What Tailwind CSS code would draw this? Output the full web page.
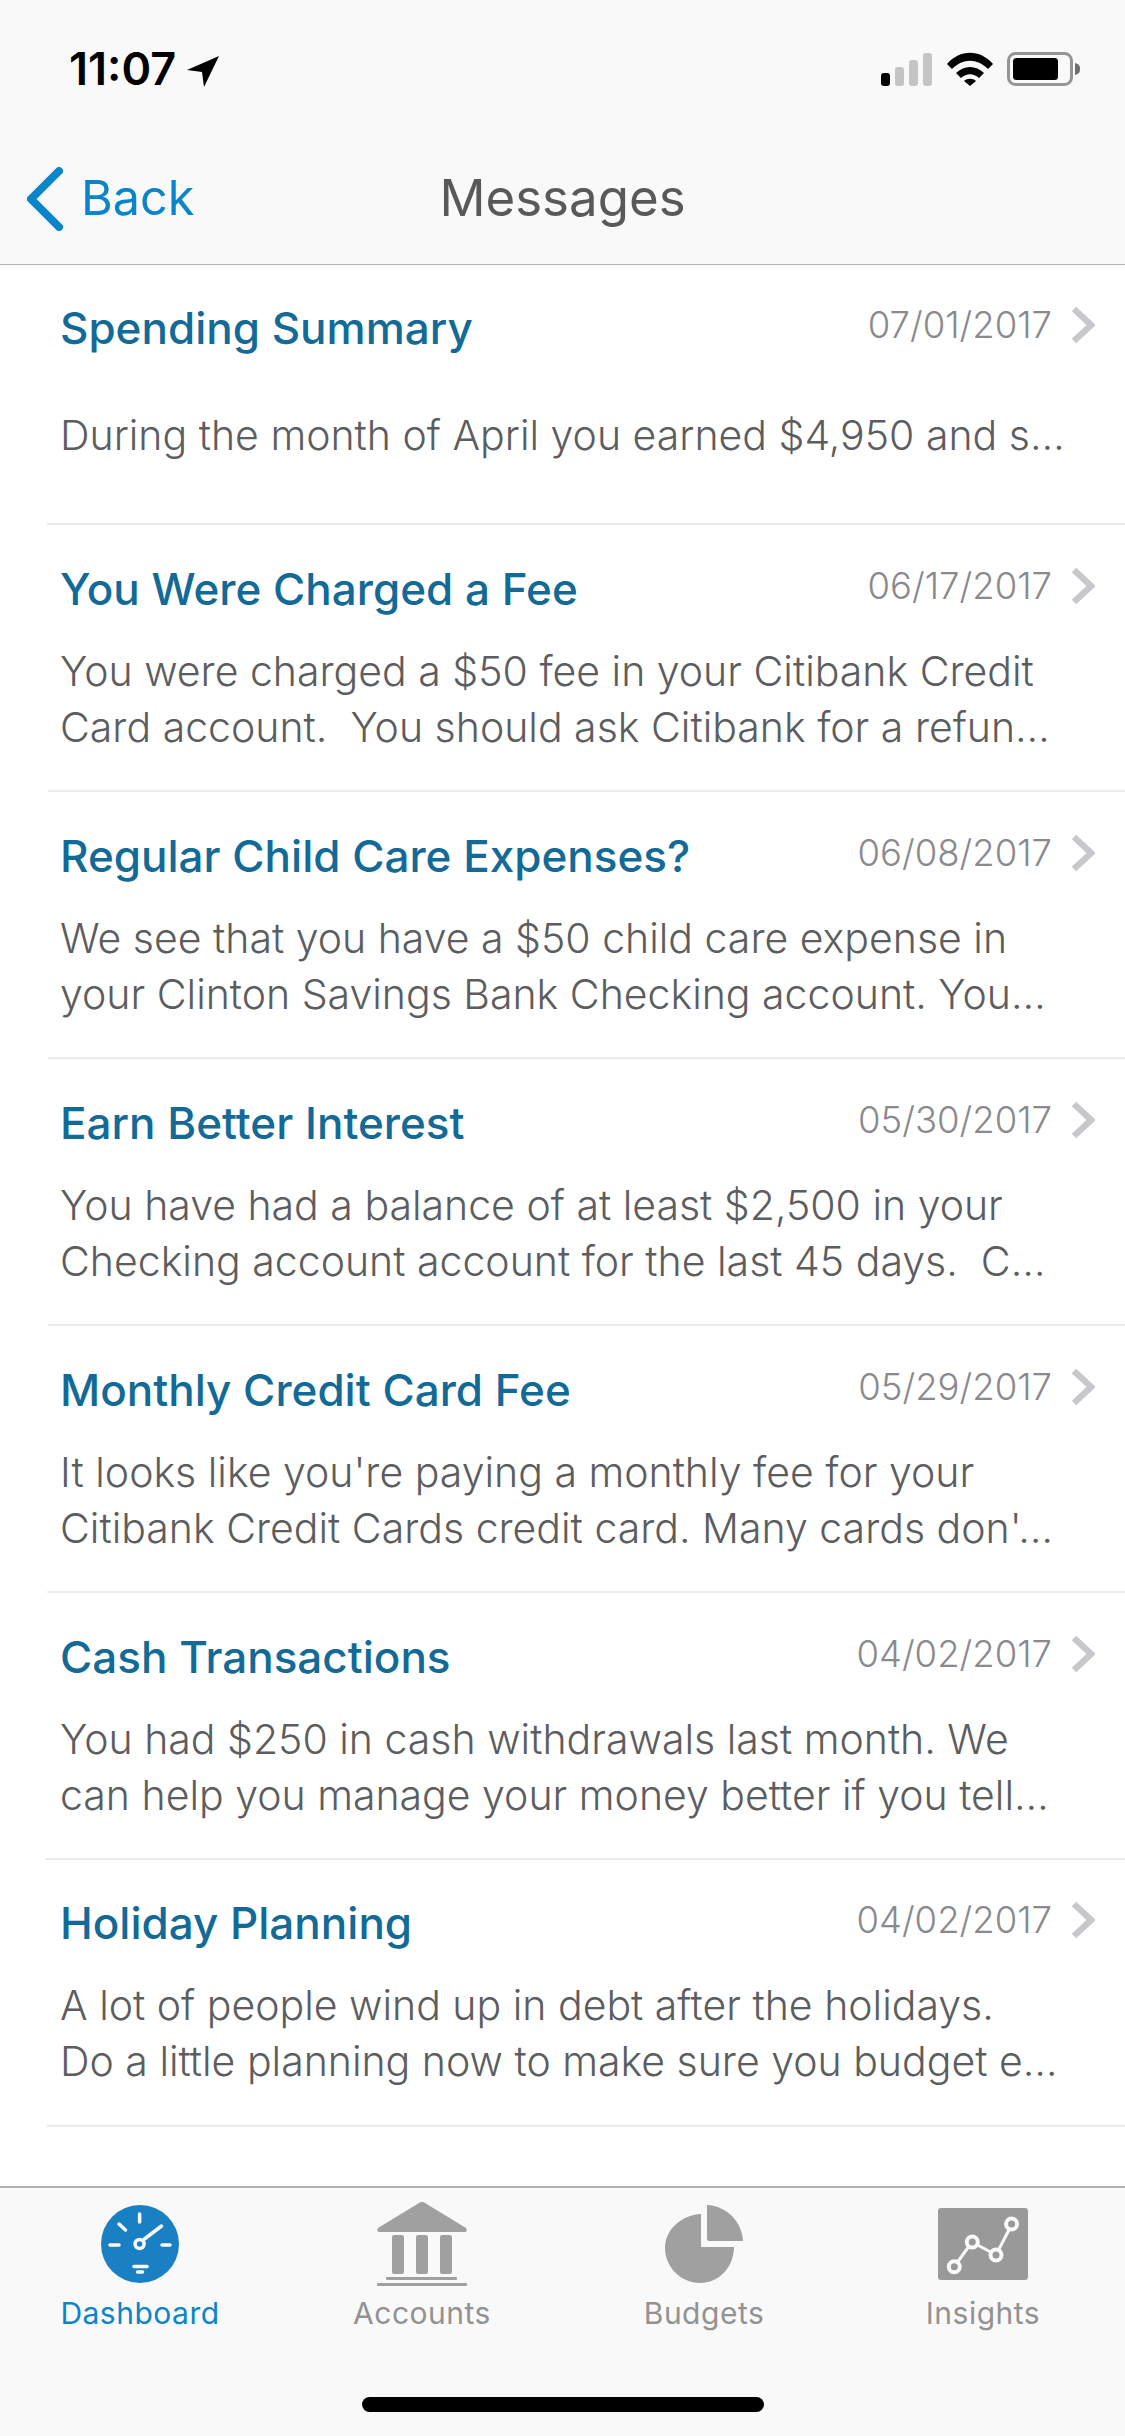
<!DOCTYPE html>
<html lang="en">
<head>
    <meta charset="UTF-8">
    <meta name="viewport" content="width=device-width, initial-scale=1.0">
    <title>Messages</title>
    <script src="https://cdn.jsdelivr.net/npm/@tailwindcss/browser@4"></script>
</head>
<body class="w-[1125px] h-[2436px] overflow-hidden bg-white flex flex-col font-['Inter',sans-serif]">

    <!-- Status bar and navigation -->
    <header class="h-[265px] shrink-0 bg-[#f9f9f9] border-b border-[#b2b2b2] flex flex-col">
        <div class="h-[135px] pl-[69px] pr-[44px] pt-[46px] flex items-start justify-between">
            <div class="flex items-center">
                <span class="text-[45px] leading-[46px] font-semibold text-black">11:07</span>
                <svg class="ml-[11px] mt-[3px]" width="32" height="32" viewBox="0 0 32 32"><path d="M32 1 L0 15 L15 17 L17 32 Z" fill="#000"/></svg>
            </div>
            <div class="flex items-center gap-[14px] mt-[6px]">
                <svg width="52" height="33" viewBox="0 0 52 33">
                    <rect x="0" y="20" width="9" height="13" rx="3" fill="#000"/>
                    <rect x="14" y="14" width="9" height="19" rx="3" fill="#c4c4c4"/>
                    <rect x="28" y="7" width="9" height="26" rx="3" fill="#c4c4c4"/>
                    <rect x="42" y="0" width="9" height="33" rx="3" fill="#c4c4c4"/>
                </svg>
                <svg width="46" height="34" viewBox="0 0 46 34">
                    <path d="M0 12 C13 -3 33 -3 46 12 L41 17 C30 6 16 6 5 17 Z" fill="#000"/>
                    <path d="M9 21 C17 13 29 13 37 21 L32 26 C26 21 20 21 14 26 Z" fill="#000"/>
                    <path d="M17 29 C20 26 26 26 29 29 L23 34 Z" fill="#000"/>
                </svg>
                <svg width="74" height="34" viewBox="0 0 74 34">
                    <rect x="1.5" y="1.5" width="63" height="31" rx="7" fill="none" stroke="#959595" stroke-width="3"/>
                    <rect x="6" y="6" width="45" height="22" rx="3.5" fill="#000"/>
                    <path d="M68 11 C72 12 73 14 73 17 C73 20 72 22 68 23 Z" fill="#6e6e6e"/>
                </svg>
            </div>
        </div>
        <nav class="relative flex-1 flex items-start pl-[27px] pt-[32px]">
            <svg width="36" height="64" viewBox="0 0 36 64"><path d="M32 4 L4 32 L32 60" fill="none" stroke="#0b85c9" stroke-width="8" stroke-linecap="round" stroke-linejoin="round"/></svg>
            <a class="ml-[18px] mt-[1px] text-[48.5px] leading-[60px] text-[#0b85c9]">Back</a>
            <h1 class="absolute left-0 right-0 top-[33px] text-center text-[51px] leading-[60px] text-[#58595b]">Messages</h1>
        </nav>
    </header>

    <!-- Message list -->
    <main class="flex-1 flex flex-col">
        <article class="h-[260px] ml-[47px] pl-[13px] border-b-2 border-[#ececec] flex flex-col">
            <div class="flex items-start justify-between pr-[30px] pt-[36px]">
                <h2 class="text-[44px] leading-[54px] font-medium text-[#136a97]">Spending Summary</h2>
                <div class="flex items-center gap-[19px] -mt-[3px]">
                    <time class="text-[36.5px] leading-[54px] font-light text-[#8a8a8e]">07/01/2017</time>
                    <svg width="24" height="38" viewBox="0 0 24 38"><path d="M3 3 L20 19 L3 35" fill="none" stroke="#c7c7cc" stroke-width="6.5"/></svg>
                </div>
            </div>
            <p class="mt-[52px] text-[41px] leading-[56px] font-light text-[#5c5d5f] whitespace-pre">During the month of April you earned $4,950 and s…</p>
        </article>
        <article class="h-[267px] ml-[48px] pl-[12px] border-b-2 border-[#ececec] flex flex-col">
            <div class="flex items-start justify-between pr-[30px] pt-[37px]">
                <h2 class="text-[44px] leading-[54px] font-medium text-[#136a97]">You Were Charged a Fee</h2>
                <div class="flex items-center gap-[19px] -mt-[3px]">
                    <time class="text-[36.5px] leading-[54px] font-light text-[#8a8a8e]">06/17/2017</time>
                    <svg width="24" height="38" viewBox="0 0 24 38"><path d="M3 3 L20 19 L3 35" fill="none" stroke="#c7c7cc" stroke-width="6.5"/></svg>
                </div>
            </div>
            <p class="mt-[27px] text-[41px] leading-[56px] font-light text-[#5c5d5f] whitespace-pre">You were charged a $50 fee in your Citibank Credit
Card account.  You should ask Citibank for a refun…</p>
        </article>
        <article class="h-[267px] ml-[48px] pl-[12px] border-b-2 border-[#ececec] flex flex-col">
            <div class="flex items-start justify-between pr-[30px] pt-[37px]">
                <h2 class="text-[44px] leading-[54px] font-medium text-[#136a97]">Regular Child Care Expenses?</h2>
                <div class="flex items-center gap-[19px] -mt-[3px]">
                    <time class="text-[36.5px] leading-[54px] font-light text-[#8a8a8e]">06/08/2017</time>
                    <svg width="24" height="38" viewBox="0 0 24 38"><path d="M3 3 L20 19 L3 35" fill="none" stroke="#c7c7cc" stroke-width="6.5"/></svg>
                </div>
            </div>
            <p class="mt-[27px] text-[41px] leading-[56px] font-light text-[#5c5d5f] whitespace-pre">We see that you have a $50 child care expense in
your Clinton Savings Bank Checking account. You…</p>
        </article>
        <article class="h-[267px] ml-[48px] pl-[12px] border-b-2 border-[#ececec] flex flex-col">
            <div class="flex items-start justify-between pr-[30px] pt-[37px]">
                <h2 class="text-[44px] leading-[54px] font-medium text-[#136a97]">Earn Better Interest</h2>
                <div class="flex items-center gap-[19px] -mt-[3px]">
                    <time class="text-[36.5px] leading-[54px] font-light text-[#8a8a8e]">05/30/2017</time>
                    <svg width="24" height="38" viewBox="0 0 24 38"><path d="M3 3 L20 19 L3 35" fill="none" stroke="#c7c7cc" stroke-width="6.5"/></svg>
                </div>
            </div>
            <p class="mt-[27px] text-[41px] leading-[56px] font-light text-[#5c5d5f] whitespace-pre">You have had a balance of at least $2,500 in your
Checking account account for the last 45 days.  C…</p>
        </article>
        <article class="h-[267px] ml-[47px] pl-[13px] border-b-2 border-[#ececec] flex flex-col">
            <div class="flex items-start justify-between pr-[30px] pt-[37px]">
                <h2 class="text-[44px] leading-[54px] font-medium text-[#136a97]">Monthly Credit Card Fee</h2>
                <div class="flex items-center gap-[19px] -mt-[3px]">
                    <time class="text-[36.5px] leading-[54px] font-light text-[#8a8a8e]">05/29/2017</time>
                    <svg width="24" height="38" viewBox="0 0 24 38"><path d="M3 3 L20 19 L3 35" fill="none" stroke="#c7c7cc" stroke-width="6.5"/></svg>
                </div>
            </div>
            <p class="mt-[27px] text-[41px] leading-[56px] font-light text-[#5c5d5f] whitespace-pre">It looks like you're paying a monthly fee for your
Citibank Credit Cards credit card. Many cards don'…</p>
        </article>
        <article class="h-[267px] ml-[45px] pl-[15px] border-b-2 border-[#ececec] flex flex-col">
            <div class="flex items-start justify-between pr-[30px] pt-[37px]">
                <h2 class="text-[44px] leading-[54px] font-medium text-[#136a97]">Cash Transactions</h2>
                <div class="flex items-center gap-[19px] -mt-[3px]">
                    <time class="text-[36.5px] leading-[54px] font-light text-[#8a8a8e]">04/02/2017</time>
                    <svg width="24" height="38" viewBox="0 0 24 38"><path d="M3 3 L20 19 L3 35" fill="none" stroke="#c7c7cc" stroke-width="6.5"/></svg>
                </div>
            </div>
            <p class="mt-[27px] text-[41px] leading-[56px] font-light text-[#5c5d5f] whitespace-pre">You had $250 in cash withdrawals last month. We
can help you manage your money better if you tell…</p>
        </article>
        <article class="h-[267px] ml-[47px] pl-[13px] border-b-2 border-[#ececec] flex flex-col">
            <div class="flex items-start justify-between pr-[30px] pt-[36px]">
                <h2 class="text-[44px] leading-[54px] font-medium text-[#136a97]">Holiday Planning</h2>
                <div class="flex items-center gap-[19px] -mt-[3px]">
                    <time class="text-[36.5px] leading-[54px] font-light text-[#8a8a8e]">04/02/2017</time>
                    <svg width="24" height="38" viewBox="0 0 24 38"><path d="M3 3 L20 19 L3 35" fill="none" stroke="#c7c7cc" stroke-width="6.5"/></svg>
                </div>
            </div>
            <p class="mt-[27px] text-[41px] leading-[56px] font-light text-[#5c5d5f] whitespace-pre">A lot of people wind up in debt after the holidays.
Do a little planning now to make sure you budget e…</p>
        </article>
    </main>

    <!-- Tab bar -->
    <footer class="h-[250px] shrink-0 bg-[#f9f9f9] border-t-2 border-[#b2b2b2] flex flex-col">
        <div class="flex pl-[60px] pt-[14px]">
            <div class="w-[160px] flex flex-col items-center">
                <div class="h-[84px] flex items-center">
                    <svg width="78" height="78" viewBox="0 0 78 78">
                        <circle cx="39" cy="39" r="39" fill="#1a80c4"/>
                        <g stroke="#f9f9f9" stroke-width="3.5" stroke-linecap="round" fill="none">
                            <path d="M38.6 9 V17"/>
                            <path d="M18 19 L24.5 25"/>
                            <path d="M9 40 H18"/>
                            <path d="M61 40 H69"/>
                            <path d="M43.5 34 L60.5 21"/>
                            <circle cx="38.6" cy="39" r="4.5"/>
                            <path d="M33 61.5 H46"/>
                            <path d="M36.5 67 H41.5"/>
                        </g>
                    </svg>
                </div>
                <span class="mt-[9px] text-[30px] leading-[36px] tracking-[0.5px] text-[#0b85c9]">Dashboard</span>
            </div>
            <div class="w-[160px] ml-[122px] flex flex-col items-center">
                <svg width="90" height="84" viewBox="0 0 90 84">
                    <path d="M45 0 C46 0 47 0 48 1 L89 26 C90 28 90 30 88 30 H2 C0 30 0 28 1 26 L42 1 C43 0 44 0 45 0 Z" fill="#a0a0a0"/>
                    <rect x="15" y="33" width="12" height="39" rx="2" fill="#a0a0a0"/>
                    <rect x="39" y="33" width="12" height="39" rx="2" fill="#a0a0a0"/>
                    <rect x="63" y="33" width="12" height="39" rx="2" fill="#a0a0a0"/>
                    <rect x="9" y="75" width="71" height="3" rx="1" fill="#a0a0a0"/>
                    <rect x="0" y="81" width="90" height="3" rx="1" fill="#a0a0a0"/>
                </svg>
                <span class="mt-[9px] text-[30px] leading-[36px] tracking-[0.5px] text-[#929292]">Accounts</span>
            </div>
            <div class="w-[160px] ml-[122px] flex flex-col items-center">
                <div class="h-[84px] flex items-center">
                    <svg width="78" height="78" viewBox="0 0 78 78">
                        <path d="M36 9 V42 H69 C69 62 54 78 35 78 C15 78 0 61 0 43 C0 25 16 10 36 9 Z" fill="#a0a0a0"/>
                        <path d="M42 0 C62 1 77 17 78 36 H44 C43 36 42 35 42 34 Z" fill="#a0a0a0"/>
                    </svg>
                </div>
                <span class="mt-[9px] text-[30px] leading-[36px] tracking-[0.5px] text-[#929292]">Budgets</span>
            </div>
            <div class="w-[160px] ml-[119px] flex flex-col items-center">
                <div class="h-[84px] flex items-center">
                    <svg width="90" height="72" viewBox="0 0 90 72">
                        <rect x="0" y="0" width="90" height="72" rx="3" fill="#999"/>
                        <path d="M16 59 L34 34 L58 47 L74 16" fill="none" stroke="#f9f9f9" stroke-width="3"/>
                        <g fill="#999" stroke="#f9f9f9" stroke-width="4">
                            <circle cx="16.3" cy="58.7" r="5.5"/>
                            <circle cx="34.3" cy="34" r="5.5"/>
                            <circle cx="58" cy="47" r="5.5"/>
                            <circle cx="73.6" cy="16" r="5.5"/>
                        </g>
                    </svg>
                </div>
                <span class="mt-[9px] text-[30px] leading-[36px] tracking-[0.5px] text-[#929292]">Insights</span>
            </div>
        </div>
        <div class="mt-[66px] mx-auto w-[402px] h-[15px] rounded-full bg-black"></div>
    </footer>
</body>
</html>
